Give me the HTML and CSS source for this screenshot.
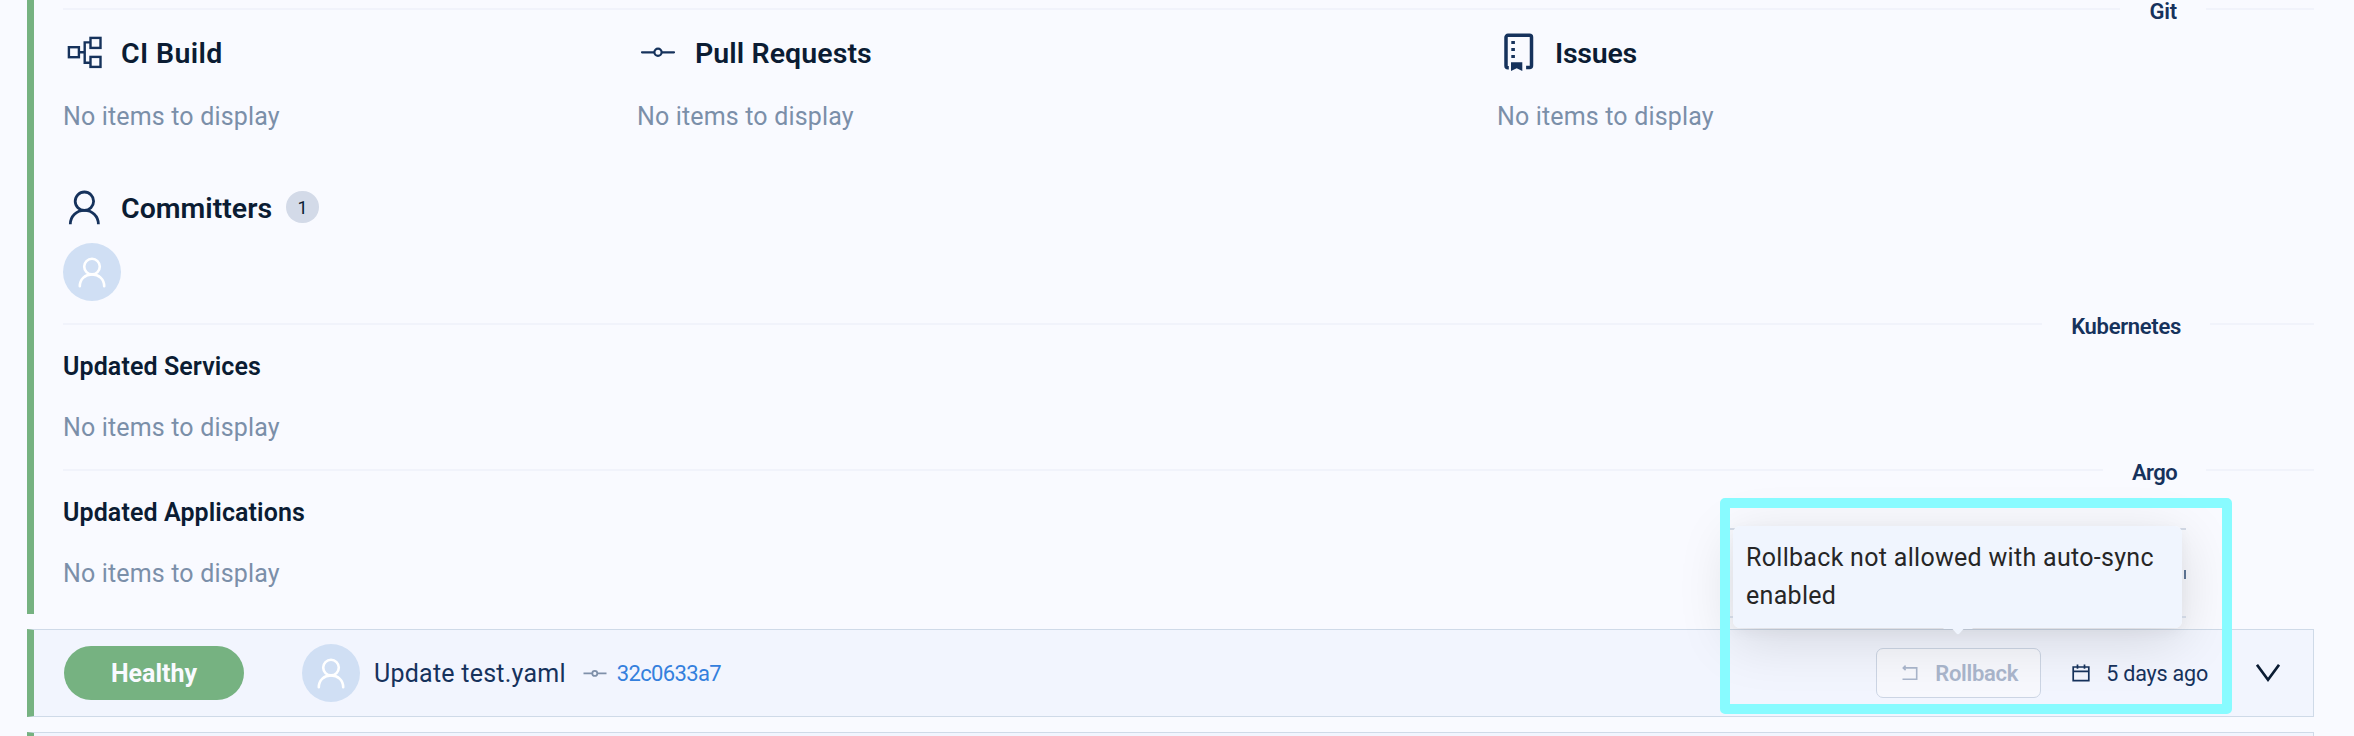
FILE: index.html
```html
<!DOCTYPE html>
<html lang="en">
<head>
<meta charset="utf-8">
<title>Deployment timeline</title>
<link rel="stylesheet" href="styles.css">
</head>
<body>
<svg class="defs" width="0" height="0" aria-hidden="true">
  <symbol id="person" viewBox="0 0 58 58">
    <circle cx="29" cy="23.6" r="7.8"/>
    <path d="M16.8 43.3C16.8 36 22.3 31.4 29 31.4S41.2 36 41.2 43.3"/>
  </symbol>
</svg>
<main class="timeline">
  <section class="release-details">
    <div class="divider"><span class="divider-label">Git</span></div>
    <div class="git-grid">
      <div class="block">
        <h2 class="heading">
          <svg class="heading-icon" width="58" height="40" viewBox="0 0 58 40"><g fill="none" stroke-width="2.4"><rect x="5.9" y="14.2" width="10" height="10"/><rect x="27.5" y="4.9" width="10" height="10"/><rect x="27.5" y="23.9" width="10" height="10"/><path d="M16.5 19.2h5M27 9.4h-5.3v20.4H27"/></g></svg>
          <span class="label wide">CI Build</span>
        </h2>
        <p class="empty">No items to display</p>
      </div>
      <div class="block">
        <h2 class="heading">
          <svg class="heading-icon" width="58" height="40" viewBox="0 0 58 40"><g fill="none" stroke-width="2.2" stroke-linecap="round"><path d="M5 19.3h12M25 19.3h12"/><circle cx="21" cy="19.3" r="3.6"/></g></svg>
          <span class="label tracked">Pull Requests</span>
        </h2>
        <p class="empty">No items to display</p>
      </div>
      <div class="block">
        <h2 class="heading">
          <svg class="heading-icon" width="58" height="40" viewBox="0 0 58 40"><path fill="none" stroke-width="3.5" d="M11.8 34.7H11a2 2 0 0 1-2-2V4.300a2 2 0 0 1 2-2h21.500a2 2 0 0 1 2 2v28.300a2 2 0 0 1-2 2h-3.400"/><path class="solid" d="M14.300 7.900h3.600V11h-3.600zM14.300 14.900h3.600v3.100h-3.600zM14.300 22h3.600v3.100h-3.600zM14 29.300h11.300V38l-5.600-2.800L14 38z"/></svg>
          <span class="label tight">Issues</span>
        </h2>
        <p class="empty">No items to display</p>
      </div>
    </div>
    <div class="committers">
      <h2 class="heading">
        <svg class="heading-icon" width="58" height="40" viewBox="0 0 58 40"><g fill="none" stroke-width="2.8"><circle cx="21.400" cy="13.200" r="9.200"/><path d="M7.300 36.300C7.300 28 13.700 22.400 21.400 22.400S35.400 28 35.400 36.300"/></g></svg>
        <span class="label">Committers</span>
        <span class="count">1</span>
      </h2>
      <span class="avatar"><svg width="58" height="58"><use href="#person"/></svg></span>
    </div>
    <div class="divider divider-kubernetes"><span class="divider-label">Kubernetes</span></div>
    <h3 class="subheading">Updated Services</h3>
    <p class="empty">No items to display</p>
    <div class="divider divider-argo"><span class="divider-label">Argo</span></div>
    <h3 class="subheading">Updated Applications</h3>
    <p class="empty">No items to display</p>
  </section>

  <section class="release-row">
    <span class="status">Healthy</span>
    <span class="avatar"><svg width="58" height="58"><use href="#person"/></svg></span>
    <span class="title">Update test.yaml</span>
    <svg class="commit-icon" width="24" height="12" viewBox="0 0 24 12"><path d="M.5 6.400H9M14.500 6.400h9"/><circle cx="11.800" cy="6.400" r="2.500"/></svg>
    <a class="hash">32c0633a7</a>
    <button class="rollback" disabled>
      <svg width="16" height="16" viewBox="0 0 16 16"><path d="M1.500 2.900H14.700V14.200H.5M3.600.700 1.300 2.900 3.600 5.100"/></svg>
      Rollback
    </button>
    <span class="date">
      <svg width="18" height="18" viewBox="0 0 18 18"><path d="M1.200 3h15.600v13.700H1.200zM1.200 7.300h15.600M5.500.500v4.300M12.500.500v4.300"/></svg>
      5 days ago
    </span>
    <svg class="chevron" width="24" height="18" viewBox="0 0 24 18"><path d="M1 .800 12 15.700 23 .800"/></svg>
  </section>
  <section class="release-row"></section>

  <div class="tooltip-shadow"></div>
  <div class="tooltip-underlay"><i></i></div>
  <div class="tooltip">Rollback not allowed with auto-sync<br>enabled
    <svg class="tooltip-arrow" width="32" height="9" viewBox="0 0 32 9"><path d="M0 0h32L30 2H21.500L17.500 6.600Q16 7.800 14.500 6.600L10.500 2H2z"/></svg>
  </div>
  <div class="highlight"></div>
</main>
</body>
</html>
```
FILE: styles.css
```css
* { box-sizing: border-box; }

body {
  margin: 0;
  background: #f9faff;
  font-family: Roboto, "Liberation Sans", sans-serif;
  color: #0b1c33;
}

h2, h3, p { margin: 0; }
svg { display: block; flex: none; }
.defs { position: absolute; }

.timeline {
  position: relative;
  height: 736px;
  padding: 0 40px 0 27px;
  overflow: hidden;
}

.release-details {
  height: 614px;
  padding-left: 29px;
  border-left: 7px solid #76b281;
}

.divider {
  display: flex;
  align-items: center;
  height: 18px;
}
.divider::before,
.divider::after {
  content: "";
  height: 2px;
  background: #f1f3fb;
}
.divider::before { flex: 1; }
.divider::after { width: 108px; }
.divider-label {
  margin-top: 5px;
  padding: 0 29px;
  font-size: 22px;
  font-weight: 600;
  line-height: 18px;
  letter-spacing: -0.2px;
  color: #16325c;
}
.divider-kubernetes { margin-top: 14px; }
.divider-kubernetes::after { width: 104px; }
.divider-kubernetes .divider-label { letter-spacing: -0.3px; }
.divider-argo { margin-top: 18px; }
.divider-argo .divider-label { letter-spacing: -0.6px; }

.git-grid {
  display: grid;
  grid-template-columns: 574px 860px 1fr;
  margin-top: 15px;
}

.heading {
  display: flex;
  align-items: center;
  height: 40px;
  font-size: 28.5px;
  font-weight: 600;
  line-height: 40px;
}
.heading-icon { stroke: #16325c; }
.heading-icon .solid { fill: #16325c; stroke: none; }
.label { padding-top: 2px; }
.wide { letter-spacing: 0.37px; }
.tracked { letter-spacing: 0.08px; }
.tight { letter-spacing: -0.25px; }

.empty {
  font-size: 25px;
  line-height: 30px;
  letter-spacing: 0.16px;
  color: #7b8fa9;
}
.block .empty { margin-top: 29px; }

.committers { margin-top: 56px; }
.committers .avatar { margin-top: 15px; }
.count {
  width: 33px;
  height: 32px;
  margin: -2px 0 0 14px;
  border-radius: 16px;
  background: #d3dae8;
  font-size: 18px;
  font-weight: 400;
  line-height: 33px;
  text-align: center;
}

.avatar {
  display: block;
  flex: none;
  width: 58px;
  height: 58px;
  border-radius: 50%;
  background: #d0dff4;
  fill: none;
  stroke: #fff;
  stroke-width: 2.6px;
  stroke-linecap: round;
}

.subheading {
  margin-top: 19px;
  font-size: 25px;
  font-weight: 600;
  line-height: 30px;
  letter-spacing: 0.1px;
}
.subheading + .empty { margin-top: 31px; }

.release-row {
  display: flex;
  align-items: center;
  height: 88px;
  margin-top: 15px;
  padding-left: 30px;
  border: 1px solid #cfdae8;
  border-left: 7px solid #76b281;
  background: #f2f5fe;
  color: #16325c;
}

.status {
  width: 180px;
  height: 54px;
  border-radius: 27px;
  background: #76b281;
  color: #f9faff;
  font-size: 25px;
  font-weight: 700;
  line-height: 55px;
  text-align: center;
}
.release-row .avatar { margin-left: 58px; }
.title {
  margin-left: 14px;
  font-size: 25px;
  letter-spacing: 0.24px;
}
.commit-icon {
  margin-left: 17px;
  fill: none;
  stroke: #7f90a9;
  stroke-width: 1.8px;
}
.hash {
  margin-left: 10px;
  font-size: 22px;
  letter-spacing: -0.65px;
  color: #3480dd;
}

.rollback {
  display: flex;
  align-items: center;
  gap: 17px;
  width: 165px;
  height: 50px;
  margin-left: auto;
  padding: 0 0 0 25px;
  border: 1px solid #ccd5e4;
  border-radius: 7px;
  background: rgb(250 250 252 / 70%);
  color: #aab6cc;
  font: 600 22px Roboto, sans-serif;
  letter-spacing: -0.3px;
}
.rollback svg { fill: none; stroke: #aab6cc; stroke-width: 1.6px; }
.date {
  display: flex;
  align-items: center;
  gap: 16px;
  margin-left: 31px;
  font-size: 21.5px;
  letter-spacing: -0.2px;
}
.date svg { fill: none; stroke: #16325c; stroke-width: 1.7px; }
.chevron {
  margin: 0 33px 0 48px;
  fill: none;
  stroke: #0b1c33;
  stroke-width: 2.6px;
}

/* Floating tooltip anchored above the rollback button */
.tooltip,
.tooltip-shadow {
  position: absolute;
  left: 1733px;
  top: 526px;
  width: 449px;
  height: 102px;
  border-radius: 7px;
}
.tooltip-shadow { box-shadow: 0 12px 56px rgb(0 0 0 / 13%), 0 4px 14px rgb(0 0 0 / 4%); }
.tooltip {
  padding: 13px 0 0 13px;
  background: #f0f5fe;
  color: #262626;
  font-size: 25px;
  line-height: 38px;
  letter-spacing: 0.3px;
  white-space: nowrap;
}
.tooltip-arrow {
  position: absolute;
  left: 209px;
  top: 101px;
  fill: #f0f5fe;
}
.tooltip-underlay {
  position: absolute;
  left: 1730px;
  top: 528px;
  width: 456px;
  height: 90px;
  border: solid #cfd6e2;
  border-width: 2px 0;
}
.tooltip-underlay i {
  position: absolute;
  right: 0;
  top: 40px;
  width: 2px;
  height: 9px;
  background: #5b7190;
}
.highlight {
  position: absolute;
  left: 1720px;
  top: 498px;
  width: 512px;
  height: 216px;
  border: 10px solid #88fbff;
  border-radius: 5px;
}
```
